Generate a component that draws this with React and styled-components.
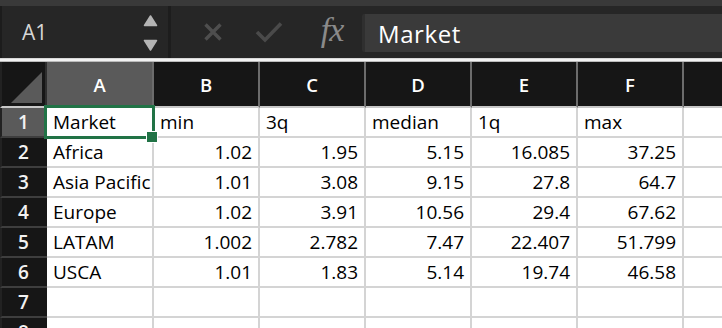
import React from "react";
import styled, { createGlobalStyle } from "styled-components";

const GlobalStyle = createGlobalStyle`
  html, body {
    margin: 0;
    padding: 0;
    background: #161616;
    overflow: hidden;
  }
`;

const Window = styled.div`
  width: 722px;
  height: 328px;
  overflow: hidden;
  font-family: "Open Sans", "Liberation Sans", sans-serif;
  background: #ffffff;
`;

const TopStrip = styled.div`
  height: 6px;
  background: #393939;
`;

const FormulaBar = styled.div`
  height: 52px;
  display: flex;
  background: #262626;
  border-left: 2px solid #1c1c1c;
`;

const NameBox = styled.div`
  width: 169px;
  display: flex;
  align-items: center;
  justify-content: space-between;
  padding: 0 10px 0 20px;
  box-sizing: border-box;
  border-right: 3px solid #1d1d1d;
  color: #d6d6d6;
  font-size: 21px;
`;

const Stepper = styled.div`
  display: flex;
  flex-direction: column;
  gap: 12px;
  padding-top: 2px;
`;

const Actions = styled.div`
  display: flex;
  align-items: center;
  padding-left: 31px;
`;

const IconSlot = styled.div`
  width: ${(p) => p.$w}px;
  display: flex;
  justify-content: center;
  align-items: center;
`;

const Fx = styled.span`
  font-family: "Liberation Serif", "DejaVu Serif", serif;
  font-style: italic;
  font-size: 34px;
  color: #8a8a8a;
  letter-spacing: -1px;
  line-height: 1;
  margin-top: -4px;
`;

const FormulaInput = styled.div`
  flex: 1;
  margin: 8px 0 6px 12px;
  background: #3a3a3a;
  border-left: 3px solid #2f2f2f;
  border-radius: 2px 0 0 2px;
  display: flex;
  align-items: center;
  padding-left: 13px;
  color: #ffffff;
  font-size: 24px;
  letter-spacing: 0.6px;
`;

const Rule = styled.div`
  height: 4px;
  background: linear-gradient(#c4c4c4 0%, #f2f2f2 30%, #f2f2f2 65%, #9c9c9c 100%);
`;

const SheetArea = styled.div`
  position: relative;
  overflow: hidden;
`;

const Sheet = styled.div`
  display: grid;
  width: max-content;
  grid-template-columns: 47px 107px repeat(6, 106px);
  grid-template-rows: 46px;
  grid-auto-rows: 30px;
`;

const Corner = styled.div`
  background: #161616;
  border-right: 2px solid #2e2e2e;
  border-bottom: 2px solid #c8c8c8;
  border-left: 2px solid #222;
  box-sizing: border-box;
  display: flex;
  align-items: flex-end;
  justify-content: flex-end;
  padding: 0 3px 3px 0;
`;

const ColHead = styled.div`
  background: ${(p) => (p.$active ? "#5a5a5a" : "#161616")};
  border-right: 2px solid #6c6c6c;
  border-bottom: 2px solid #c8c8c8;
  box-sizing: border-box;
  display: flex;
  align-items: center;
  justify-content: center;
  color: #ffffff;
  font-size: 18.5px;
  font-weight: 600;
`;

const RowHead = styled.div`
  background: ${(p) => (p.$active ? "#5a5a5a" : "#161616")};
  border-bottom: 2px solid #3e3e3e;
  border-left: 2px solid #222;
  box-sizing: border-box;
  display: flex;
  align-items: center;
  justify-content: center;
  padding-right: 2px;
  color: #f2f2f2;
  font-size: 19px;
  font-weight: 600;
`;

const Cell = styled.div`
  background: #ffffff;
  border-right: 2px solid #d4d4d4;
  border-bottom: 2px solid #d4d4d4;
  box-sizing: border-box;
  display: flex;
  align-items: center;
  justify-content: ${(p) => (p.$num ? "flex-end" : "flex-start")};
  padding: 0 6px;
  color: #000000;
  font-size: 19px;
  white-space: nowrap;
  overflow: hidden;
`;

const Selection = styled.div`
  position: absolute;
  left: 44px;
  top: 43px;
  width: 111px;
  height: 34px;
  border: 3px solid #217346;
  box-sizing: border-box;
  pointer-events: none;
`;

const Handle = styled.div`
  position: absolute;
  left: 147px;
  top: 70px;
  width: 10px;
  height: 10px;
  background: #217346;
  outline: 1px solid #ffffff;
`;

const columns = ["A", "B", "C", "D", "E", "F", ""];

const rows = [
  ["Market", "min", "3q", "median", "1q", "max"],
  ["Africa", "1.02", "1.95", "5.15", "16.085", "37.25"],
  ["Asia Pacific", "1.01", "3.08", "9.15", "27.8", "64.7"],
  ["Europe", "1.02", "3.91", "10.56", "29.4", "67.62"],
  ["LATAM", "1.002", "2.782", "7.47", "22.407", "51.799"],
  ["USCA", "1.01", "1.83", "5.14", "19.74", "46.58"],
  [],
  [],
];

const isNum = (v) => v !== undefined && /^[0-9.]+$/.test(v);

function Triangle({ down }) {
  return (
    <svg width="15" height="12" viewBox="0 0 15 12">
      <path
        d={down ? "M1.5 1.5 L13.5 1.5 L7.5 11 Z" : "M7.5 1 L13.5 10.5 L1.5 10.5 Z"}
        fill="#b4b4b4"
        stroke="#b4b4b4"
        strokeWidth="1.5"
        strokeLinejoin="round"
      />
    </svg>
  );
}

function CancelIcon() {
  return (
    <svg width="20" height="18" viewBox="0 0 20 18">
      <path d="M2.5 1.5 L17.5 16.5 M17.5 1.5 L2.5 16.5" stroke="#4e4e4e" strokeWidth="3.4" />
    </svg>
  );
}

function ConfirmIcon() {
  return (
    <svg width="28" height="22" viewBox="0 0 28 22">
      <path d="M2 11 L10 19 L26 2.5" fill="none" stroke="#4a4a4a" strokeWidth="3.6" />
    </svg>
  );
}

function CornerMark() {
  return (
    <svg width="31" height="31" viewBox="0 0 31 31">
      <path d="M31 0 L31 31 L0 31 Z" fill="#5a5a5a" />
    </svg>
  );
}

export default function App() {
  return (
    <Window>
      <GlobalStyle />
      <TopStrip />
      <FormulaBar>
        <NameBox>
          <span>A1</span>
          <Stepper>
            <Triangle />
            <Triangle down />
          </Stepper>
        </NameBox>
        <Actions>
          <IconSlot $w={22}>
            <CancelIcon />
          </IconSlot>
          <IconSlot $w={90}>
            <ConfirmIcon />
          </IconSlot>
          <IconSlot $w={36}>
            <Fx>fx</Fx>
          </IconSlot>
        </Actions>
        <FormulaInput>Market</FormulaInput>
      </FormulaBar>
      <Rule />
      <SheetArea>
        <Sheet>
          <Corner>
            <CornerMark />
          </Corner>
          {columns.map((c, i) => (
            <ColHead key={i} $active={c === "A"}>
              {c}
            </ColHead>
          ))}
          {rows.map((r, ri) => (
            <React.Fragment key={ri}>
              <RowHead $active={ri === 0}>{ri + 1}</RowHead>
              {columns.map((_, ci) => (
                <Cell key={ci} $num={ri > 0 && isNum(r[ci])}>
                  {r[ci] || ""}
                </Cell>
              ))}
            </React.Fragment>
          ))}
        </Sheet>
        <Selection />
        <Handle />
      </SheetArea>
    </Window>
  );
}
